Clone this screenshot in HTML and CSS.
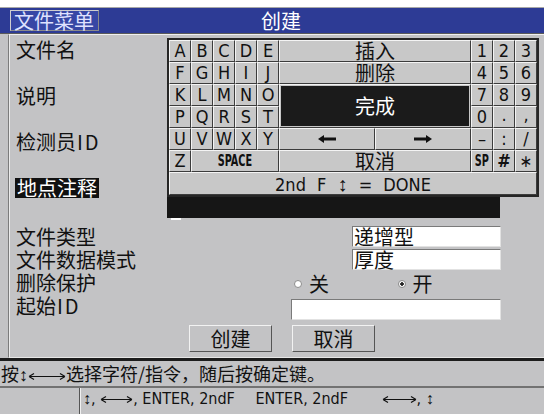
FILE: index.html
```html
<!DOCTYPE html>
<html lang="zh-CN">
<head>
    <meta charset="UTF-8">
    <meta name="viewport" content="width=device-width, initial-scale=1.0">
    <title>创建</title>
    <link rel="stylesheet" href="styles.css">
</head>
<body>

    <div class="top-strip"></div>

    <div class="titlebar">
        <span class="menu-btn">文件菜单</span>
        <span class="title">创建</span>
    </div>

    <div class="panel">
        <div class="upper-row"><span class="label">文件名</span></div>
        <div class="upper-row"><span class="label">说明</span></div>
        <div class="upper-row"><span class="label">检测员<span class="latin">ID</span></span></div>
        <div class="upper-row">
            <span class="label active">地点注释</span>
            <div class="note">
                <div class="note-field"></div>
                <div class="cursor"></div>
            </div>
        </div>

        <div class="lower">
            <div class="lower-row">
                <span class="label">文件类型</span>
                <div class="value-box">递增型</div>
            </div>
            <div class="lower-row">
                <span class="label">文件数据模式</span>
                <div class="value-box">厚度</div>
            </div>
            <div class="lower-row">
                <span class="label">删除保护</span>
                <div class="radios">
                    <span class="option"><span class="radio"></span>关</span>
                    <span class="option"><span class="radio on"></span>开</span>
                </div>
            </div>
            <div class="lower-row">
                <span class="label">起始<span class="latin">ID</span></span>
                <div class="value-box id-box"></div>
            </div>
        </div>

        <div class="buttons">
            <div class="btn">创建</div>
            <div class="btn">取消</div>
        </div>

        <!-- on-screen keyboard popup -->
        <div class="keyboard">
            <div class="key">A</div><div class="key">B</div><div class="key">C</div><div class="key">D</div><div class="key">E</div>
            <div class="key cjk wide">插入</div>
            <div class="key">1</div><div class="key">2</div><div class="key">3</div>

            <div class="key">F</div><div class="key">G</div><div class="key">H</div><div class="key">I</div><div class="key">J</div>
            <div class="key cjk wide">删除</div>
            <div class="key">4</div><div class="key">5</div><div class="key">6</div>

            <div class="key">K</div><div class="key">L</div><div class="key">M</div><div class="key">N</div><div class="key">O</div>
            <div class="key cjk wide done">完成</div>
            <div class="key">7</div><div class="key">8</div><div class="key">9</div>

            <div class="key">P</div><div class="key">Q</div><div class="key">R</div><div class="key">S</div><div class="key">T</div>
            <div class="key">0</div><div class="key low">.</div><div class="key low">,</div>

            <div class="key">U</div><div class="key">V</div><div class="key">W</div><div class="key">X</div><div class="key">Y</div>
            <div class="key">
                <svg width="18" height="8" viewBox="0 0 18 8"><path d="M0 4L6 0V2.5H18V5.5H6V8Z" fill="#111"/></svg>
            </div>
            <div class="key">
                <svg width="18" height="8" viewBox="0 0 18 8"><path d="M18 4L12 0V2.5H0V5.5H12V8Z" fill="#111"/></svg>
            </div>
            <div class="key">–</div><div class="key">:</div><div class="key">/</div>

            <div class="key">Z</div>
            <div class="key space"><span class="squeeze">SPACE</span></div>
            <div class="key cjk wide">取消</div>
            <div class="key"><span class="squeeze">SP</span></div><div class="key heavy">#</div><div class="key star">∗</div>

            <div class="key fn-row"><span>2nd F <span class="sym big">↕</span> = DONE</span></div>
        </div>
    </div>

    <div class="status1">按<span class="sym">↕</span><svg class="long-arrow" width="38" height="9" viewBox="0 0 38 9"><path d="M1 4.5H37M1 4.5L6 1.5M1 4.5L6 7.5M37 4.5L32 1.5M37 4.5L32 7.5" stroke="#111" stroke-width="1.2" fill="none"/></svg>选择字符/指令，随后按确定键。</div>

    <div class="status2">
        <div class="blank"></div>
        <div class="hint"><span class="sym">↕</span>, <svg class="long-arrow" width="33" height="9" viewBox="0 0 33 9"><path d="M1 4.5H32M1 4.5L6 1.5M1 4.5L6 7.5M32 4.5L27 1.5M32 4.5L27 7.5" stroke="#111" stroke-width="1.2" fill="none"/></svg>, ENTER, 2ndF <span class="gap-a"></span>ENTER, 2ndF <span class="gap-b"></span><svg class="long-arrow" width="35" height="9" viewBox="0 0 35 9"><path d="M1 4.5H34M1 4.5L6 1.5M1 4.5L6 7.5M34 4.5L29 1.5M34 4.5L29 7.5" stroke="#111" stroke-width="1.2" fill="none"/></svg>, <span class="sym">↕</span></div>
    </div>

</body>
</html>
```

FILE: styles.css
```css
* {
    box-sizing: border-box;
}

body {
    margin: 0;
    width: 544px;
    height: 414px;
    overflow: hidden;
    background-color: #c3c3c5;
    color: #111;
    font-family: "Noto Sans CJK SC", sans-serif;
}

.top-strip {
    height: 8px;
    background-color: #fff;
    border-bottom: 1px solid #a8a8a8;
}

/* blue title bar */
.titlebar {
    display: flex;
    align-items: center;
    height: 26px;
    padding-left: 10px;
    background-color: #2d3b95;
    border-bottom: 1px solid #5a5a5a;
}

.menu-btn {
    width: 89px;
    height: 21px;
    padding-left: 3px;
    font-size: 20px;
    line-height: 19px;
    color: #dfe2ff;
    background-color: #3747a5;
    border: 1px solid #cfcfcf;
    border-right-color: #8a8a8a;
    border-bottom-color: #8a8a8a;
}

.title {
    margin-left: 162px;
    font-size: 20px;
    line-height: 20px;
    color: #fff;
}

/* main form panel */
.panel {
    position: relative;
    height: 324px;
    margin-left: 8px;
    padding: 5px 0 0 7px;
    border-left: 1px solid #7c7c7c;
    border-top: 1px solid #f0f0f0;
    border-bottom: 1px solid #e6e6e6;
    box-shadow: inset 1px 0 0 #ececec;
}

.label {
    align-self: start;
    font-size: 20px;
    line-height: 20px;
    white-space: nowrap;
}

.latin {
    letter-spacing: 2px;
    margin-left: 1px;
}

.label.active {
    justify-self: start;
    margin-left: -1px;
    padding: 0 2px;
    color: #fff;
    background-color: #111;
}

.upper-row {
    display: grid;
    grid-template-columns: 151px 333px;
    height: 46px;
}

.note-field {
    height: 40px;
    background-color: #161616;
}

.cursor {
    width: 10px;
    height: 2px;
    margin-left: 4px;
    background-color: #fff;
}

.lower {
    margin-top: 2px;
}

.lower-row {
    display: grid;
    grid-template-columns: 275px 210px;
    height: 23px;
}

.lower-row .label {
    padding-top: 1px;
}

.value-box {
    height: 21px;
    margin-left: 61px;
    padding-left: 1px;
    font-size: 20px;
    line-height: 19px;
    background-color: #fff;
    border: 1px solid #e2e2e2;
    border-top-color: #7a7a7a;
    border-left-color: #7a7a7a;
}

.id-box {
    margin-left: 0;
    margin-top: 4px;
}

.radios {
    display: flex;
    align-items: center;
    padding-left: 3px;
    font-size: 20px;
    line-height: 20px;
}

.option {
    display: flex;
    align-items: center;
    gap: 7px;
    width: 106px;
}

.radio {
    width: 8px;
    height: 8px;
    border-radius: 50%;
    border: 1px solid #8c8c8c;
    background-color: #fff;
}

.radio.on {
    background: radial-gradient(circle, #222 0 1.5px, #fff 2px);
}

.buttons {
    display: flex;
    gap: 20px;
    margin-top: 7px;
    padding-left: 173px;
}

.btn {
    display: flex;
    align-items: center;
    justify-content: center;
    width: 83px;
    height: 27px;
    font-size: 20px;
    border: 1px solid #f2f2f2;
    border-right-color: #555;
    border-bottom-color: #555;
}

/* keyboard popup */
.keyboard {
    position: absolute;
    left: 158px;
    top: 3px;
    width: 372px;
    height: 159px;
    display: grid;
    grid-template-columns: repeat(5, 22px) 96px 96px repeat(3, 22px);
    grid-template-rows: repeat(6, 22px) 23px;
    border: 2px solid #262626;
    background-color: #c8c8c8;
}

.key {
    display: flex;
    align-items: center;
    justify-content: center;
    font-family: "Liberation Sans Narrow", "DejaVu Sans Condensed", "Liberation Sans", sans-serif;
    font-stretch: condensed;
    font-size: 18px;
    line-height: 1;
    border: 1px solid #f4f4f4;
    border-right-color: #3c3c3c;
    border-bottom-color: #3c3c3c;
}

.key.cjk {
    font-family: "Noto Sans CJK SC", sans-serif;
    font-size: 20px;
}

.key.wide {
    grid-column: span 2;
}

.key.done {
    grid-row: span 2;
    color: #fff;
    background-color: #1b1b1b;
    box-shadow: inset 0 0 0 1px #c8c8c8;
}

.key.space {
    grid-column: span 4;
}

.key.low {
    align-items: flex-end;
    padding-bottom: 3px;
}

.key.heavy {
    font-weight: bold;
}

.key.star {
    font-family: "DejaVu Sans", sans-serif;
    font-size: 17px;
}

.squeeze {
    display: inline-block;
    font-size: 15px;
    font-weight: bold;
    transform: scaleX(0.72);
}

.key.fn-row {
    grid-column: 1 / -1;
    word-spacing: 6px;
    white-space: pre;
}

.sym {
    font-family: "Liberation Sans", "DejaVu Sans", sans-serif;
}

.sym.big {
    font-size: 20px;
}

.long-arrow {
    display: inline-block;
    vertical-align: middle;
}

/* bottom status bars */
.status1 {
    height: 30px;
    padding-left: 1px;
    font-size: 18px;
    line-height: 25px;
    white-space: nowrap;
    border-top: 3px solid #1c1c1c;
    border-bottom: 2px solid #727272;
}

.status2 {
    display: flex;
    height: 26px;
}

.blank {
    width: 80px;
    border-right: 1px solid #555;
}

.hint {
    padding-left: 2px;
    font-family: "Liberation Sans Narrow", "DejaVu Sans Condensed", "Liberation Sans", sans-serif;
    font-stretch: condensed;
    font-size: 16px;
    line-height: 22px;
    white-space: nowrap;
    border-left: 1px solid #f0f0f0;
}

.gap-a {
    display: inline-block;
    width: 16px;
}

.gap-b {
    display: inline-block;
    width: 29px;
}
```
